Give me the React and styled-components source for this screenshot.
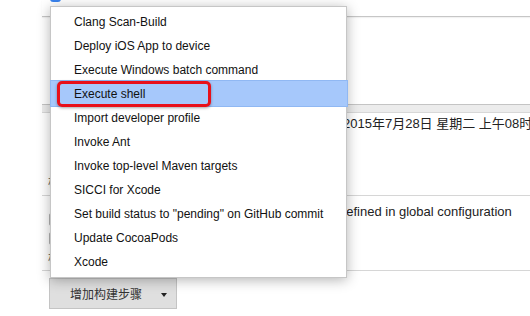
import React from "react";
import styled, { createGlobalStyle } from "styled-components";

const Global = createGlobalStyle`
  html, body { margin: 0; padding: 0; background: #fff; }
  body { font-family: "Liberation Sans", Arial, sans-serif; }
  * { box-sizing: border-box; }
`;

const Page = styled.div`
  position: relative;
  width: 530px;
  height: 316px;
  overflow: hidden;
  background: #fff;
  color: #222;
  font-size: 13px;
  line-height: 16px;
`;

const Form = styled.div`
  margin-left: 42px;
  display: flex;
  flex-direction: column;
`;

const TopRow = styled.div`
  height: 17px;
  display: flex;
  align-items: flex-start;
  padding-left: 8px;
  border-bottom: 1px solid #c6c6c6;
  box-shadow: 0 1px 1px rgba(0, 0, 0, 0.05);
`;

const BlueCheck = styled.div`
  width: 11px;
  height: 12px;
  margin-top: -10px;
  border-radius: 3px;
  background: #3a83ee;
`;

const Blank = styled.div`
  height: 87px;
`;

const SectionBar = styled.div`
  height: 9px;
  background: #ececec;
  border-top: 1px solid #c4c4c4;
  border-bottom: 1px solid #d8d8d8;
`;

const FieldRow = styled.div`
  height: ${(p) => p.$h}px;
  display: grid;
  grid-template-columns: ${(p) => p.$labelWidth}px 1fr;
  border-bottom: 1px solid #d6d6d6;
`;

const LabelCol = styled.div`
  display: flex;
  flex-direction: column;
  justify-content: space-between;
  padding: ${(p) => p.$top}px 0 ${(p) => p.$bottom}px 6px;
`;

const Checks = styled.div`
  display: flex;
  flex-direction: column;
  gap: 6px;
  padding-left: 1px;
`;

const Check = styled.div`
  width: 13px;
  height: 13px;
  border: 1px solid #b4b4b4;
  border-radius: 2px;
  background: #fff;
`;

const Label = styled.div`
  font-family: "Noto Sans CJK SC", "Liberation Sans", sans-serif;
  font-size: 12px;
  line-height: 16px;
  color: #555;
`;

const Value = styled.div`
  padding-top: ${(p) => p.$top}px;
  white-space: nowrap;
  font-family: "Liberation Sans", "Noto Sans CJK SC", sans-serif;
  font-size: 13px;
  line-height: 16px;
  color: #222;
`;

const ButtonRow = styled.div`
  padding: 7px 0 0 7px;
`;

const AddButton = styled.button`
  width: 128px;
  height: 31px;
  display: flex;
  align-items: center;
  padding: 0 0 0 20px;
  gap: 19px;
  background: #dfdfdf;
  border: 1px solid #c4c4c4;
  border-radius: 0;
  font-family: "Noto Sans CJK SC", "Liberation Sans", sans-serif;
  font-size: 12px;
  color: #333;
`;

const Caret = styled.span`
  width: 0;
  height: 0;
  border-left: 3.5px solid transparent;
  border-right: 3.5px solid transparent;
  border-top: 4px solid #222;
  margin-top: 2px;
`;

const Menu = styled.ul`
  position: absolute;
  left: 50px;
  top: 6px;
  width: 297px;
  margin: 0;
  padding: 3px 0 3px;
  list-style: none;
  background: #fff;
  border: 1px solid #c6c6c6;
  box-shadow: 0 2px 12px rgba(0, 0, 0, 0.3);
`;

const Item = styled.li`
  position: relative;
  height: 24px;
  line-height: 24px;
  padding-left: 23px;
  font-family: "Liberation Sans", Arial, sans-serif;
  font-size: 12px;
  color: #111;
  white-space: nowrap;

  ${(p) =>
    p.$active &&
    `
    &::before {
      content: "";
      position: absolute;
      left: -1px;
      right: -2px;
      top: -2px;
      bottom: -1px;
      background: #a6c8fb;
      border: 1px solid #90b8f3;
    }
  `}
`;

const ItemText = styled.span`
  position: relative;
`;

const Callout = styled.span`
  position: absolute;
  left: 6px;
  top: -1px;
  width: 154px;
  height: 26px;
  border: 3.5px solid #e8101a;
  border-radius: 5px;
  box-shadow: 0 1px 3px rgba(0, 0, 0, 0.35);
`;

const items = [
  "Clang Scan-Build",
  "Deploy iOS App to device",
  "Execute Windows batch command",
  "Execute shell",
  "Import developer profile",
  "Invoke Ant",
  "Invoke top-level Maven targets",
  "SICCI for Xcode",
  'Set build status to "pending" on GitHub commit',
  "Update CocoaPods",
  "Xcode",
];

export default function App() {
  return (
    <Page>
      <Global />
      <Form>
        <TopRow>
          <BlueCheck />
        </TopRow>
        <Blank />
        <SectionBar />
        <FieldRow $h={83} $labelWidth={301}>
          <LabelCol $top={0} $bottom={5}>
            <span />
            <Label>构建</Label>
          </LabelCol>
          <Value $top={3}>2015年7月28日 星期二 上午08时</Value>
        </FieldRow>
        <FieldRow $h={75} $labelWidth={297}>
          <LabelCol $top={17} $bottom={4}>
            <Checks>
              <Check />
              <Check />
            </Checks>
            <Label>构建</Label>
          </LabelCol>
          <Value $top={8}>defined in global configuration</Value>
        </FieldRow>
        <ButtonRow>
          <AddButton>
            增加构建步骤
            <Caret />
          </AddButton>
        </ButtonRow>
      </Form>
      <Menu>
        {items.map((t) => (
          <Item key={t} $active={t === "Execute shell"}>
            <ItemText>{t}</ItemText>
            {t === "Execute shell" && <Callout />}
          </Item>
        ))}
      </Menu>
    </Page>
  );
}
